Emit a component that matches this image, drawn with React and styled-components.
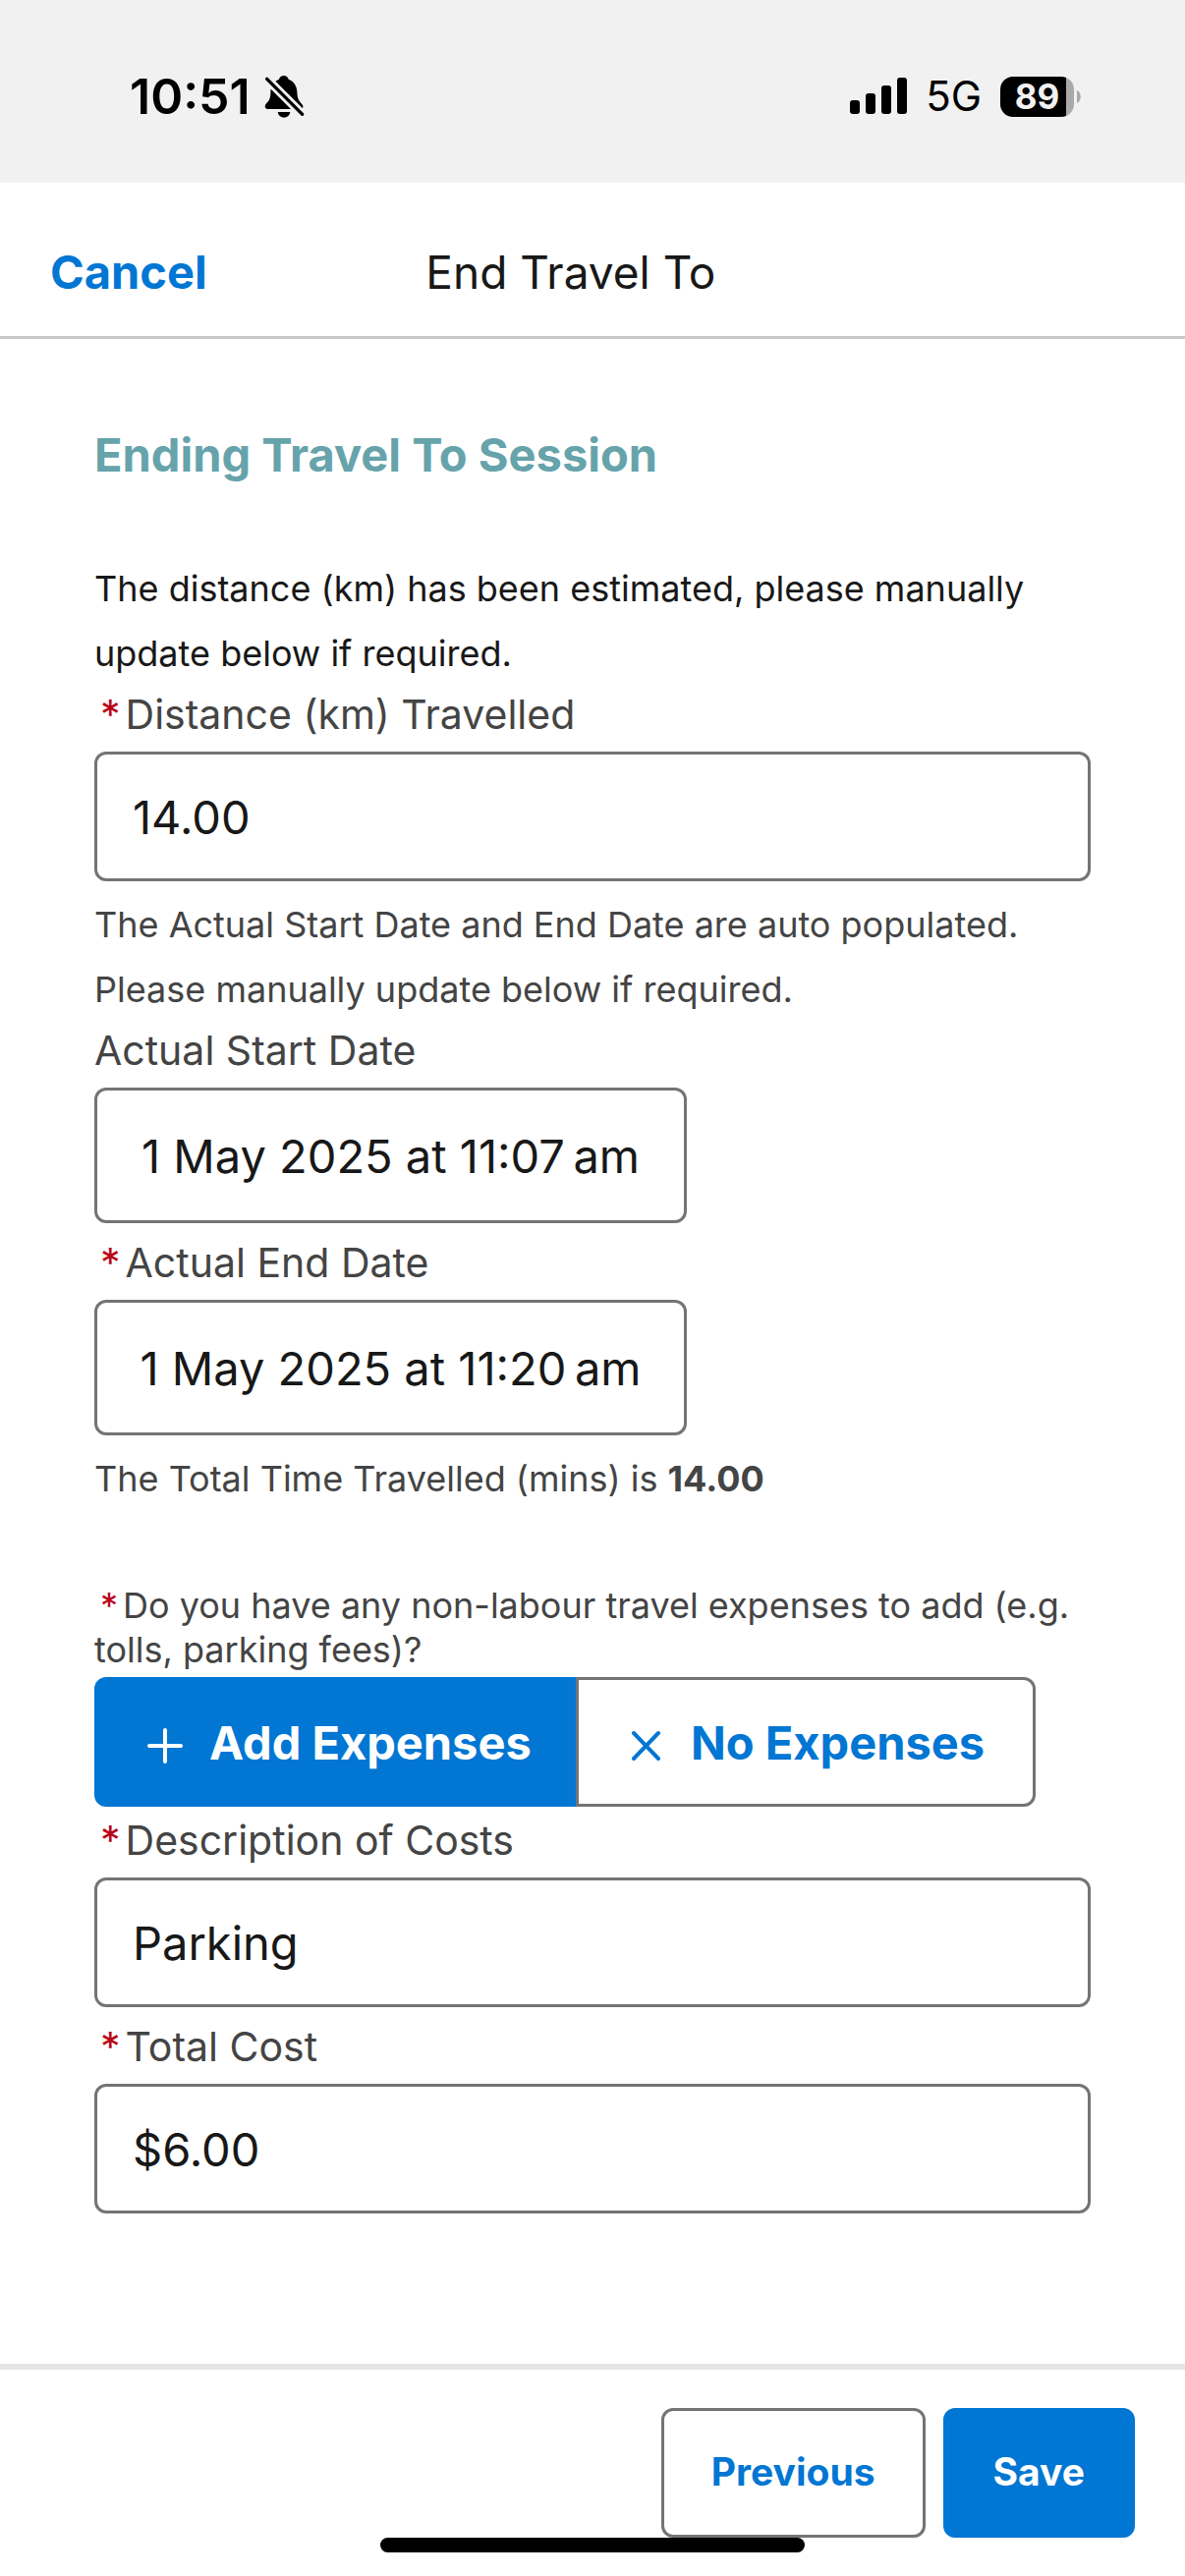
import React, { useState } from "react";
import styled, { createGlobalStyle, css } from "styled-components";

const color = {
  brand: "#0176d3",
  heading: "#66a3ab",
  text: "#181818",
  muted: "#444444",
  border: "#747474",
  required: "#ba0517",
  status: "#f1f1f1",
};

const GlobalStyle = createGlobalStyle`
  *, *::before, *::after { box-sizing: border-box; }
  body {
    margin: 0;
    background: #fff;
    color: ${color.text};
    font-family: Inter, "Liberation Sans", sans-serif;
  }
  button, input { font-family: inherit; }
`;

const Page = styled.div`
  position: relative;
  display: flex;
  flex-direction: column;
  min-height: 100vh;
`;

const StatusBar = styled.div`
  display: flex;
  align-items: center;
  justify-content: space-between;
  height: 186px;
  padding: 10px 106px 0 132px;
  background: ${color.status};
  color: #000;
`;

const StatusGroup = styled.div`
  display: flex;
  align-items: center;
  gap: ${(p) => p.$gap}px;
`;

const Time = styled.span`
  font-size: 50px;
  font-weight: 600;
  line-height: 60px;
`;

const Network = styled.span`
  font-size: 42px;
  line-height: 60px;
`;

const Battery = styled.div`
  display: flex;
  align-items: center;
  gap: 3px;
`;

const BatteryBody = styled.div`
  display: flex;
  align-items: center;
  justify-content: center;
  width: 75px;
  height: 41px;
  border-radius: 13px;
  background: linear-gradient(to right, #000 89%, #a9a9a9 89%);
  color: ${color.status};
  font-size: 35px;
  font-weight: 700;
  line-height: 41px;
`;

const Header = styled.header`
  display: flex;
  align-items: center;
  height: 159px;
  padding: 26px 255px 0 51px;
  border-bottom: 3px solid #c9c9c9;
`;

const CancelButton = styled.button`
  padding: 0;
  border: 0;
  background: none;
  color: ${color.brand};
  font-size: 47px;
  font-weight: 700;
  line-height: 60px;
`;

const Title = styled.h1`
  flex: 1;
  margin: 0;
  text-align: center;
  font-size: 46px;
  font-weight: 400;
  line-height: 60px;
`;

const Form = styled.main`
  display: flex;
  flex: 1;
  flex-direction: column;
  padding: 88px 96px 60px;
`;

const SectionHeading = styled.h2`
  margin: 0 0 73px;
  color: ${color.heading};
  font-size: 47px;
  font-weight: 700;
  line-height: 60px;
`;

const Note = styled.p`
  margin: 0 0 ${(p) => (p.$last ? 74 : 0)}px;
  color: ${(p) => (p.$strong ? color.text : color.muted)};
  font-size: 36px;
  line-height: 66px;
`;

const Field = styled.div`
  display: flex;
  flex-direction: column;
  margin-bottom: 11px;
`;

const Label = styled.label`
  margin-bottom: 9px;
  color: ${color.muted};
  font-size: 41px;
  line-height: 58px;
`;

const Star = styled.abbr`
  margin: 0 5px 0 6px;
  color: ${color.required};
  text-decoration: none;
`;

const Input = styled.input`
  width: 100%;
  height: 132px;
  padding: 0 36px;
  border: 3px solid ${color.border};
  border-radius: 12px;
  background: #fff;
  color: ${color.text};
  font-size: 47px;

  ${(p) =>
    p.$date &&
    css`
      max-width: 603px;
      height: 138px;
      text-align: center;
    `}
`;

const Question = styled.div`
  margin-bottom: 5px;
  color: ${color.muted};
  font-size: 36px;
  line-height: 45px;
`;

const Choices = styled.div`
  display: grid;
  grid-template-columns: 490fr 468fr;
  width: 100%;
  max-width: 958px;
  margin-bottom: 5px;
`;

const Choice = styled.button`
  display: flex;
  align-items: center;
  gap: 24px;
  height: 132px;
  padding: 0 0 0 48px;
  border: 3px solid ${(p) => (p.$on ? color.brand : color.border)};
  background: ${(p) => (p.$on ? color.brand : "#fff")};
  color: ${(p) => (p.$on ? "#fff" : color.brand)};
  font-size: 47px;
  font-weight: 700;

  &:first-child { border-radius: 12px 0 0 12px; }
  &:last-child { border-radius: 0 12px 12px 0; }
`;

const Footer = styled.footer`
  display: flex;
  justify-content: flex-end;
  gap: 18px;
  padding: 39px 51px;
  border-top: 6px solid #e5e5e5;
`;

const ActionButton = styled.button`
  height: 132px;
  padding: 0 48px 4px;
  border: 3px solid ${(p) => (p.$primary ? color.brand : color.border)};
  border-radius: 12px;
  background: ${(p) => (p.$primary ? color.brand : "#fff")};
  color: ${(p) => (p.$primary ? "#fff" : color.brand)};
  font-size: 39px;
  font-weight: 700;
`;

const HomeIndicator = styled.div`
  position: absolute;
  bottom: 24px;
  left: 50%;
  width: 432px;
  height: 15px;
  border-radius: 8px;
  background: #000;
  transform: translateX(-50%);
`;

const BellOff = () => (
  <svg width="41" height="45" viewBox="510 78 123 135" aria-hidden="true">
    <path d="M569 81C577 81 582 85 584 92C601 99 609 112 610 130C611 151 615 158 624 167C632 176 628 183 618 183H521C511 183 511 175 514 169C518 162 528 160 529 136C529 112 537 99 555 92C557 85 562 81 569 81Z" />
    <path d="M551 192H589C587 203 579 209 570 209S553 203 551 192Z" />
    <path d="M500 73L646 219" stroke={color.status} strokeWidth="27" />
    <path d="M518 91L626 199" stroke="#000" strokeWidth="10" strokeLinecap="round" />
  </svg>
);

const Signal = () => (
  <svg width="58" height="38" viewBox="0 0 58 38" aria-hidden="true">
    <rect x="0" y="23" width="10" height="14" rx="3" />
    <rect x="16" y="16" width="10" height="21" rx="3" />
    <rect x="32" y="8" width="10" height="29" rx="3" />
    <rect x="48" y="0" width="10" height="37" rx="3" />
  </svg>
);

const BatteryTip = () => (
  <svg width="4" height="13" viewBox="0 0 4 13" aria-hidden="true">
    <path d="M0 0C5 2 5 11 0 13Z" fill="#a9a9a9" />
  </svg>
);

const PlusIcon = () => (
  <svg width="42" height="48" viewBox="0 0 42 48" fill="none" stroke="currentColor" strokeWidth="4" strokeLinecap="round" aria-hidden="true">
    <path d="M21 12V44M5 28H37" />
  </svg>
);

const CrossIcon = () => (
  <svg width="42" height="48" viewBox="0 0 42 48" fill="none" stroke="currentColor" strokeWidth="4" strokeLinecap="round" aria-hidden="true">
    <path d="M8 15L33 41M33 15L8 41" />
  </svg>
);

const Required = () => <Star title="required">*</Star>;

function TextField({ id, label, value, required, date }) {
  return (
    <Field>
      <Label htmlFor={id}>
        {required && <Required />}
        {label}
      </Label>
      <Input id={id} type="text" defaultValue={value} required={required} $date={date} />
    </Field>
  );
}

export default function App() {
  const [adding, setAdding] = useState(true);

  return (
    <Page>
      <GlobalStyle />
      <StatusBar>
        <StatusGroup $gap={14}>
          <Time>10:51</Time>
          <BellOff />
        </StatusGroup>
        <StatusGroup $gap={19}>
          <Signal />
          <Network>5G</Network>
          <Battery>
            <BatteryBody>89</BatteryBody>
            <BatteryTip />
          </Battery>
        </StatusGroup>
      </StatusBar>

      <Header>
        <CancelButton type="button">Cancel</CancelButton>
        <Title>End Travel To</Title>
      </Header>

      <Form>
        <SectionHeading>Ending Travel To Session</SectionHeading>
        <Note $strong>
          The distance (km) has been estimated, please manually update below if required.
        </Note>
        <TextField id="distance" label="Distance (km) Travelled" value="14.00" required />
        <Note>
          The Actual Start Date and End Date are auto populated. Please manually update below if
          required.
        </Note>
        <TextField id="start" label="Actual Start Date" value={"1 May 2025 at 11:07\u202fam"} date />
        <TextField id="end" label="Actual End Date" value={"1 May 2025 at 11:20\u202fam"} required date />
        <Note $last>
          The Total Time Travelled (mins) is <b>14.00</b>
        </Note>
        <Question id="expenses">
          <Required />
          Do you have any non-labour travel expenses to add (e.g. tolls, parking fees)?
        </Question>
        <Choices role="group" aria-labelledby="expenses">
          <Choice type="button" $on={adding} aria-pressed={adding} onClick={() => setAdding(true)}>
            <PlusIcon />
            Add Expenses
          </Choice>
          <Choice type="button" $on={!adding} aria-pressed={!adding} onClick={() => setAdding(false)}>
            <CrossIcon />
            No Expenses
          </Choice>
        </Choices>
        <TextField id="description" label="Description of Costs" value="Parking" required />
        <TextField id="total" label="Total Cost" value="$6.00" required />
      </Form>

      <Footer>
        <ActionButton type="button">Previous</ActionButton>
        <ActionButton type="button" $primary>
          Save
        </ActionButton>
      </Footer>
      <HomeIndicator />
    </Page>
  );
}
